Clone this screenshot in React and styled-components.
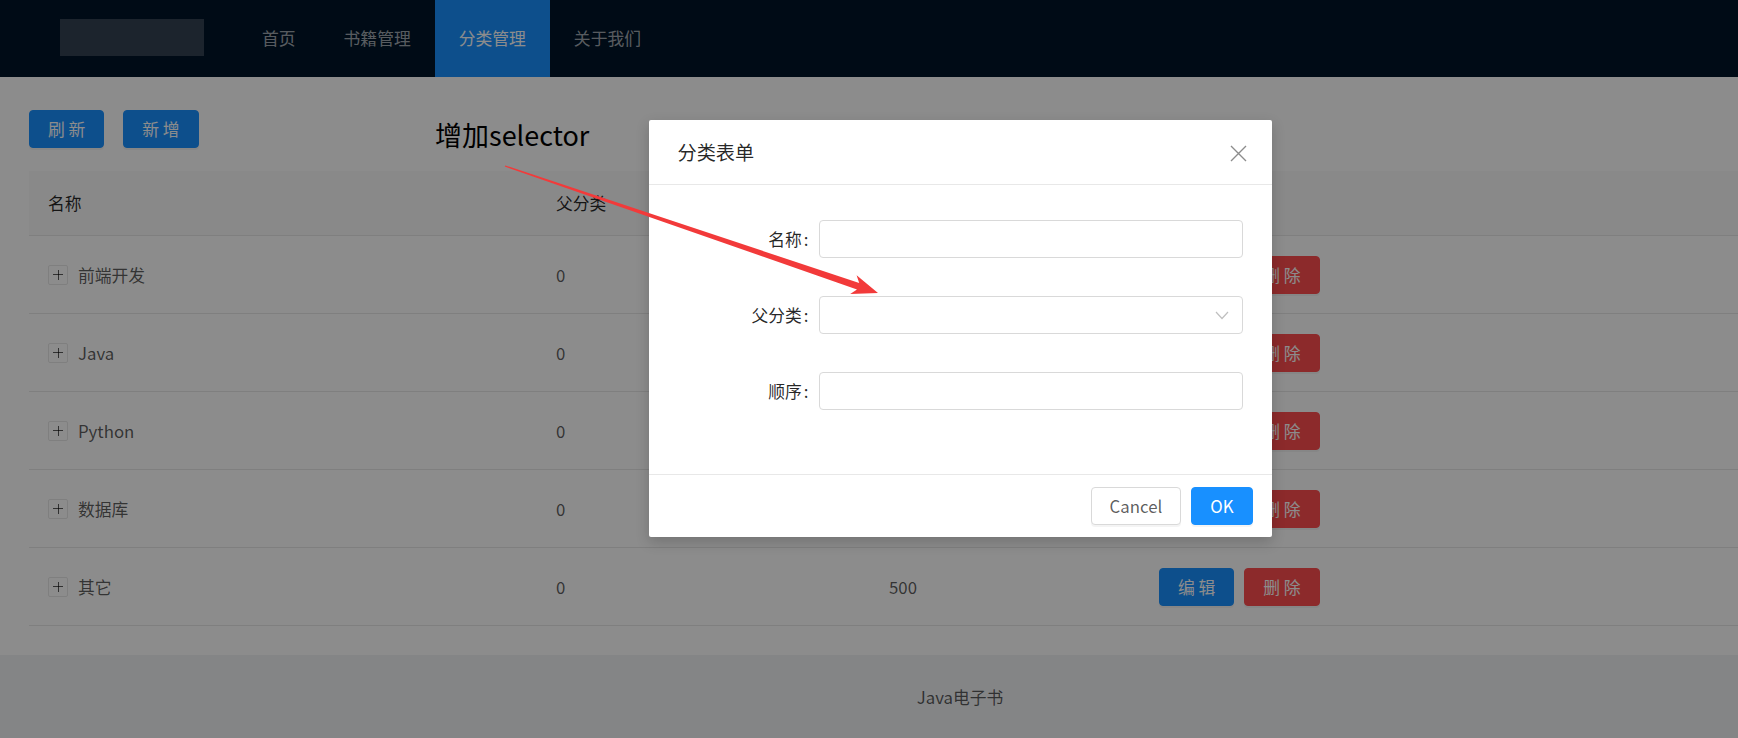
import React from "react";
import styled, { createGlobalStyle } from "styled-components";

const GlobalStyle = createGlobalStyle`
  html, body {
    margin: 0;
    padding: 0;
    overflow: hidden;
  }
  body {
    font-family: "Noto Sans CJK SC", "Noto Sans", sans-serif;
  }
  * {
    box-sizing: border-box;
  }
`;

const Page = styled.div`
  position: relative;
  width: 1920px;
  min-height: 738px;
  display: flex;
  flex-direction: column;
  background: #f0f2f5;
`;

const Header = styled.header`
  height: 77px;
  background: #001529;
  padding: 0 60px;
  display: flex;
  align-items: flex-start;
`;

const Logo = styled.div`
  width: 144px;
  height: 37px;
  margin: 19px 34px 0 0;
  background: rgba(255, 255, 255, 0.2);
`;

const Menu = styled.nav`
  display: flex;
  height: 77px;
`;

const NavItem = styled.div`
  padding: 0 24px;
  line-height: 77px;
  font-size: 16.8px;
  color: ${(p) => (p.$active ? "#fff" : "rgba(255, 255, 255, 0.65)")};
  background: ${(p) => (p.$active ? "#1890ff" : "transparent")};
`;

const Content = styled.main`
  background: #fff;
  padding: 33px 29px 29px;
`;

const Toolbar = styled.div`
  display: flex;
  gap: 19px;
  margin-bottom: 23px;
`;

const Button = styled.button`
  height: 38px;
  padding: 0 18px;
  font-family: inherit;
  font-size: 16.8px;
  line-height: 36px;
  border-radius: 4px;
  border: 1px solid
    ${(p) =>
      p.$kind === "primary" ? "#1890ff" : p.$kind === "danger" ? "#ff4d4f" : "#d9d9d9"};
  background: ${(p) =>
    p.$kind === "primary" ? "#1890ff" : p.$kind === "danger" ? "#ff4d4f" : "#fff"};
  color: ${(p) => (p.$kind ? "#fff" : "rgba(0, 0, 0, 0.65)")};
  box-shadow: 0 2px 0 rgba(0, 0, 0, 0.045);
  white-space: pre;
`;

const TableRow = styled.div`
  display: grid;
  grid-template-columns: 508px 333px 270px 1fr;
  height: ${(p) => (p.$head ? "65px" : "78px")};
  border-bottom: 1px solid #e8e8e8;
  background: ${(p) => (p.$head ? "#fafafa" : "#fff")};
  color: ${(p) => (p.$head ? "rgba(0, 0, 0, 0.85)" : "rgba(0, 0, 0, 0.65)")};
  font-size: 16.8px;
  line-height: 26px;
`;

const Cell = styled.div`
  padding: 0 19px;
  display: flex;
  align-items: center;
  gap: 10px;
`;

const Expand = styled.span`
  position: relative;
  width: 20px;
  height: 20px;
  border: 1px solid #e8e8e8;
  border-radius: 2px;
  background: #fff;
  flex: none;

  &::before,
  &::after {
    content: "";
    position: absolute;
    background: currentColor;
  }
  &::before {
    left: 4px;
    right: 4px;
    top: 8.5px;
    height: 1px;
  }
  &::after {
    top: 4px;
    bottom: 4px;
    left: 8.5px;
    width: 1px;
  }
`;

const Footer = styled.footer`
  padding: 29px 60px;
  text-align: center;
  font-size: 16.8px;
  line-height: 26px;
  color: rgba(0, 0, 0, 0.65);
  background: #f0f2f5;
`;

const Mask = styled.div`
  position: absolute;
  inset: 0;
  background: rgba(0, 0, 0, 0.45);
`;

const ModalLayer = styled.div`
  position: absolute;
  inset: 0;
  display: flex;
  justify-content: center;
  align-items: flex-start;
  padding-top: 120px;
`;

const Modal = styled.div`
  position: relative;
  width: 623px;
  background: #fff;
  border-radius: 2px;
  box-shadow: 0 5px 14px rgba(0, 0, 0, 0.18);
`;

const ModalHeader = styled.div`
  padding: 19px 29px;
  border-bottom: 1px solid #e8e8e8;
  font-size: 19.2px;
  line-height: 26px;
  color: rgba(0, 0, 0, 0.85);
`;

const Close = styled.span`
  position: absolute;
  top: 0;
  right: 0;
  width: 67px;
  height: 67px;
  display: flex;
  align-items: center;
  justify-content: center;
  color: rgba(0, 0, 0, 0.45);
`;

const ModalBody = styled.div`
  padding: 35px 29px 64px;
  display: flex;
  flex-direction: column;
  gap: 38px;
`;

const FormItem = styled.div`
  display: flex;
  align-items: center;
  height: 38px;
`;

const Label = styled.label`
  width: 141px;
  padding-right: 10px;
  text-align: right;
  font-size: 16.8px;
  color: rgba(0, 0, 0, 0.85);

  &::after {
    content: ":";
    margin-left: 2px;
  }
`;

const Field = styled.div`
  position: relative;
  flex: 1;
  height: 38px;
  border: 1px solid #d9d9d9;
  border-radius: 4px;
  background: #fff;
`;

const Arrow = styled.svg`
  position: absolute;
  right: 13px;
  top: 12px;
`;

const ModalFooter = styled.div`
  border-top: 1px solid #e8e8e8;
  padding: 12px 19px;
  display: flex;
  justify-content: flex-end;
  gap: 10px;
`;

const Note = styled.div`
  position: absolute;
  left: 435px;
  top: 119px;
  font-size: 27px;
  line-height: 31px;
  color: #000;
  white-space: nowrap;
`;

const Overlay = styled.svg`
  position: absolute;
  left: 0;
  top: 0;
  pointer-events: none;
`;

const rows = [
  { name: "前端开发", parent: 0, sort: 100 },
  { name: "Java", parent: 0, sort: 200 },
  { name: "Python", parent: 0, sort: 300 },
  { name: "数据库", parent: 0, sort: 400 },
  { name: "其它", parent: 0, sort: 500 },
];

// tapered annotation arrow from (505,166) to (878,293)
const arrowPoints = (() => {
  const sx = 505, sy = 166, tx = 878, ty = 293;
  const dx = tx - sx, dy = ty - sy;
  const len = Math.hypot(dx, dy);
  const ux = dx / len, uy = dy / len;
  const nx = -uy, ny = ux;
  const headLen = 26, headW = 10;
  const bx = tx - ux * headLen, by = ty - uy * headLen;
  const jx = tx - ux * (headLen - 5), jy = ty - uy * (headLen - 5);
  const p = (x, y) => `${x.toFixed(1)},${y.toFixed(1)}`;
  return [
    p(sx + nx * 0.6, sy + ny * 0.6),
    p(jx + nx * 3.4, jy + ny * 3.4),
    p(bx + nx * headW, by + ny * headW),
    p(tx, ty),
    p(bx - nx * headW, by - ny * headW),
    p(jx - nx * 3.4, jy - ny * 3.4),
    p(sx - nx * 0.6, sy - ny * 0.6),
  ].join(" ");
})();

export default function App() {
  return (
    <>
      <GlobalStyle />
      <Page>
        <Header>
          <Logo />
          <Menu>
            <NavItem>首页</NavItem>
            <NavItem>书籍管理</NavItem>
            <NavItem $active>分类管理</NavItem>
            <NavItem>关于我们</NavItem>
          </Menu>
        </Header>

        <Content>
          <Toolbar>
            <Button $kind="primary">刷 新</Button>
            <Button $kind="primary">新 增</Button>
          </Toolbar>
          <div>
            <TableRow $head>
              <Cell>名称</Cell>
              <Cell>父分类</Cell>
              <Cell>顺序</Cell>
              <Cell>操作</Cell>
            </TableRow>
            {rows.map((r) => (
              <TableRow key={r.name}>
                <Cell>
                  <Expand />
                  {r.name}
                </Cell>
                <Cell>{r.parent}</Cell>
                <Cell>{r.sort}</Cell>
                <Cell>
                  <Button $kind="primary">编 辑</Button>
                  <Button $kind="danger">删 除</Button>
                </Cell>
              </TableRow>
            ))}
          </div>
        </Content>

        <Footer>Java电子书</Footer>

        <Mask />
        <ModalLayer>
          <Modal>
            <ModalHeader>分类表单</ModalHeader>
            <Close>
              <svg width="19" height="19" viewBox="0 0 19 19">
                <path
                  d="M2 2 L17 17 M17 2 L2 17"
                  stroke="currentColor"
                  strokeWidth="1.4"
                  fill="none"
                />
              </svg>
            </Close>
            <ModalBody>
              <FormItem>
                <Label>名称</Label>
                <Field />
              </FormItem>
              <FormItem>
                <Label>父分类</Label>
                <Field>
                  <Arrow width="14" height="12" viewBox="0 0 14 12">
                    <polyline
                      points="1,3 7,9.5 13,3"
                      fill="none"
                      stroke="rgba(0,0,0,0.25)"
                      strokeWidth="1.2"
                    />
                  </Arrow>
                </Field>
              </FormItem>
              <FormItem>
                <Label>顺序</Label>
                <Field />
              </FormItem>
            </ModalBody>
            <ModalFooter>
              <Button>Cancel</Button>
              <Button $kind="primary">OK</Button>
            </ModalFooter>
          </Modal>
        </ModalLayer>

        <Note>增加selector</Note>
        <Overlay width="1920" height="738">
          <polygon points={arrowPoints} fill="#f23a3a" />
        </Overlay>
      </Page>
    </>
  );
}
